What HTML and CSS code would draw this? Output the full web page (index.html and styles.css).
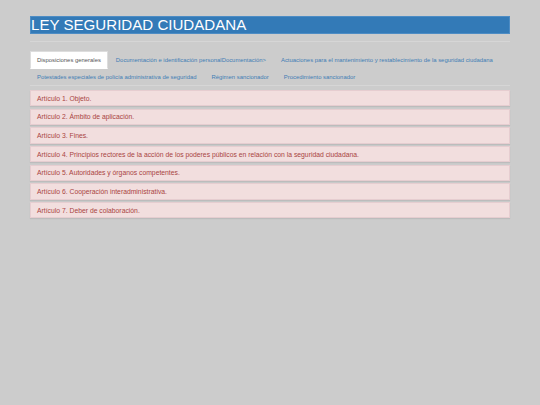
FILE: index.html
```html
<!DOCTYPE html>
<html lang="es">
<head>
    <meta charset="UTF-8">
    <meta name="viewport" content="width=device-width, initial-scale=1.0">
    <title>Ley Seguridad Ciudadana</title>
    <link rel="stylesheet" href="styles.css">
</head>
<body>
    <div class="container">
        <h1 class="title">LEY SEGURIDAD CIUDADANA</h1>
        <hr class="rule">
        <ul class="tabs">
            <li class="active"><a href="#t1">Disposiciones generales</a></li>
            <li><a href="#t2">Documentación e identificación personalDocumentación&gt;</a></li>
            <li><a href="#t3">Actuaciones para el mantenimiento y restablecimiento de la seguridad ciudadana</a></li>
            <li><a href="#t4">Potestades especiales de policía administrativa de seguridad</a></li>
            <li><a href="#t5">Régimen sancionador</a></li>
            <li><a href="#t6">Procedimiento sancionador</a></li>
        </ul>
        <div class="tab-content">
            <div class="panel">Artículo 1. Objeto.</div>
            <div class="panel">Artículo 2. Ámbito de aplicación.</div>
            <div class="panel">Artículo 3. Fines.</div>
            <div class="panel">Artículo 4. Principios rectores de la acción de los poderes públicos en relación con la seguridad ciudadana.</div>
            <div class="panel">Artículo 5. Autoridades y órganos competentes.</div>
            <div class="panel">Artículo 6. Cooperación interadministrativa.</div>
            <div class="panel">Artículo 7. Deber de colaboración.</div>
        </div>
    </div>
</body>
</html>
```

FILE: styles.css
```css
body {
    font-family: "Liberation Sans", Arial, sans-serif;
    margin: 0;
    padding: 0;
    background-color: #cccccc;
}
.container {
    width: 480px;
    margin: 0 auto;
}
.title {
    margin: 16px 0 0;
    height: 18px;
    box-sizing: border-box;
    background-color: #337ab7;
    border: 1px solid #4d8cc4;
    color: white;
    font-size: 15.1px;
    font-weight: normal;
    line-height: 16px;
    white-space: nowrap;
}
.rule {
    margin: 7px 0 9px;
    border: 0;
    border-top: 1px solid #d6d6d6;
}
.tabs {
    list-style: none;
    margin: 0;
    padding: 0;
    display: flex;
    flex-wrap: wrap;
    border-bottom: 1px solid #d6d6d6;
}
.tabs li {
    margin-bottom: -1px;
}
.tabs a {
    display: block;
    margin-right: 1px;
    padding: 4.5px 6px;
    font-size: 5.9px;
    line-height: 7px;
    color: #3f7db5;
    text-decoration: none;
    border: 1px solid transparent;
}
.tabs .active a {
    background-color: white;
    color: #555;
    border-color: #dddddd;
    border-bottom-color: transparent;
}
.tab-content {
    margin-top: 4px;
}
.panel {
    margin-bottom: 2.3px;
    padding: 3.7px 6px;
    background-color: #f2dede;
    border: 1px solid #e6cdd0;
    box-shadow: 0 1px 1px rgba(0, 0, 0, 0.08);
    color: #a94442;
    font-size: 6.8px;
    line-height: 7px;
}
```
